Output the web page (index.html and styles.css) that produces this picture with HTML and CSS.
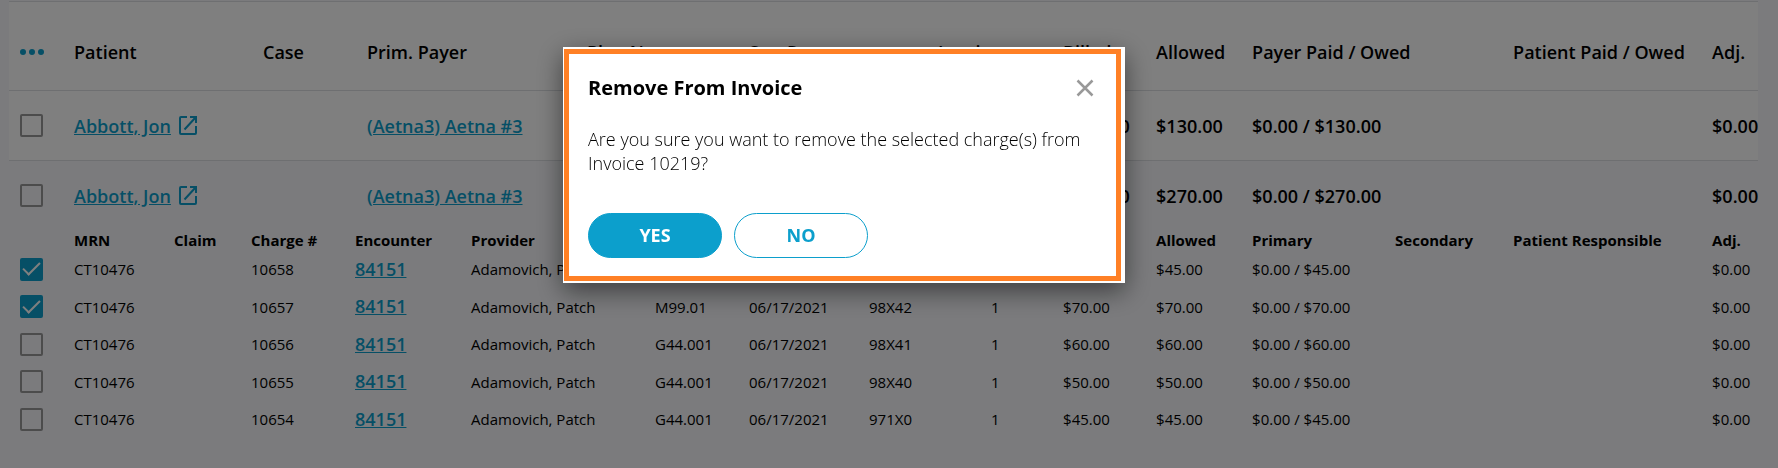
FILE: index.html
```html
<!DOCTYPE html>
<html lang="en">
<head>
<meta charset="utf-8">
<title>Charges</title>
<link rel="stylesheet" href="styles.css">
</head>
<body>
<svg class="sprite" aria-hidden="true">
  <symbol id="external" viewBox="0 0 18 19">
    <path d="M8 1H2A1 1 0 0 0 1 2V17a1 1 0 0 0 1 1h14a1 1 0 0 0 1-1V10M11 1h6v6M17 1L5.500 13.500" fill="none" stroke="currentColor" stroke-width="2"/>
  </symbol>
</svg>
<main class="page">
  <table class="charges">
    <colgroup>
      <col class="c-pick"><col class="c-mrn"><col class="c-claim"><col class="c-step"><col class="c-case"><col class="c-step"><col class="c-encounter"><col class="c-provider"><col class="c-plan"><col class="c-code"><col class="c-date"><col class="c-cpt"><col class="c-invoice"><col class="c-units"><col class="c-billed"><col class="c-allowed"><col class="c-primary"><col class="c-secondary"><col class="c-responsible"><col class="c-adj">
    </colgroup>
    <thead>
      <tr class="head">
        <th class="pick"><button class="more" type="button" aria-label="More actions"><svg viewBox="0 0 24 6" width="24" height="6"><circle cx="3" cy="3" r="3"/><circle cx="12" cy="3" r="3"/><circle cx="21" cy="3" r="3"/></svg></button></th>
        <th colspan="3">Patient</th>
        <th colspan="2">Case</th>
        <th colspan="2">Prim. Payer</th>
        <th colspan="2">Plan Name</th>
        <th colspan="2">Svc. Range</th>
        <th colspan="2">Invoice</th>
        <th>Billed</th>
        <th>Allowed</th>
        <th colspan="2">Payer Paid / Owed</th>
        <th>Patient Paid / Owed</th>
        <th>Adj.</th>
      </tr>
    </thead>
    <tbody>
      <tr class="patient">
        <td class="pick"><input class="check" type="checkbox" aria-label="Select Abbott, Jon, $130.00"></td>
        <td colspan="5"><span class="name"><a href="#">Abbott, Jon</a><a class="external" href="#" aria-label="Open patient"><svg width="18" height="19"><use href="#external"/></svg></a></span></td>
        <td colspan="8"><a href="#">(Aetna3) Aetna #3</a></td>
        <td>$130.00</td>
        <td>$130.00</td>
        <td colspan="3">$0.00 / $130.00</td>
        <td>$0.00</td>
      </tr>
      <tr class="patient expanded">
        <td class="pick"><input class="check" type="checkbox" aria-label="Select Abbott, Jon, $270.00"></td>
        <td colspan="5"><span class="name"><a href="#">Abbott, Jon</a><a class="external" href="#" aria-label="Open patient"><svg width="18" height="19"><use href="#external"/></svg></a></span></td>
        <td colspan="8"><a href="#">(Aetna3) Aetna #3</a></td>
        <td>$270.00</td>
        <td>$270.00</td>
        <td colspan="3">$0.00 / $270.00</td>
        <td>$0.00</td>
      </tr>
    </tbody>
    <tbody class="lines">
      <tr class="subhead">
        <th></th>
        <th>MRN</th>
        <th>Claim</th>
        <th colspan="2">Charge #</th>
        <th colspan="2">Encounter</th>
        <th colspan="8">Provider</th>
        <th>Allowed</th>
        <th>Primary</th>
        <th>Secondary</th>
        <th>Patient Responsible</th>
        <th>Adj.</th>
      </tr>
      <tr>
        <td class="pick"><input class="check" type="checkbox" aria-label="Select charge 10658" checked></td>
        <td colspan="2">CT10476</td><td colspan="2">10658</td><td colspan="2"><a href="#">84151</a></td><td colspan="8">Adamovich, Patch</td><td>$45.00</td><td colspan="3">$0.00 / $45.00</td><td>$0.00</td>
      </tr>
      <tr>
        <td class="pick"><input class="check" type="checkbox" aria-label="Select charge 10657" checked></td>
        <td colspan="2">CT10476</td><td colspan="2">10657</td><td colspan="2"><a href="#">84151</a></td><td colspan="2">Adamovich, Patch</td><td>M99.01</td><td>06/17/2021</td><td colspan="2">98X42</td><td>1</td><td>$70.00</td><td>$70.00</td><td colspan="3">$0.00 / $70.00</td><td>$0.00</td>
      </tr>
      <tr>
        <td class="pick"><input class="check" type="checkbox" aria-label="Select charge 10656"></td>
        <td colspan="2">CT10476</td><td colspan="2">10656</td><td colspan="2"><a href="#">84151</a></td><td colspan="2">Adamovich, Patch</td><td>G44.001</td><td>06/17/2021</td><td colspan="2">98X41</td><td>1</td><td>$60.00</td><td>$60.00</td><td colspan="3">$0.00 / $60.00</td><td>$0.00</td>
      </tr>
      <tr>
        <td class="pick"><input class="check" type="checkbox" aria-label="Select charge 10655"></td>
        <td colspan="2">CT10476</td><td colspan="2">10655</td><td colspan="2"><a href="#">84151</a></td><td colspan="2">Adamovich, Patch</td><td>G44.001</td><td>06/17/2021</td><td colspan="2">98X40</td><td>1</td><td>$50.00</td><td>$50.00</td><td colspan="3">$0.00 / $50.00</td><td>$0.00</td>
      </tr>
      <tr>
        <td class="pick"><input class="check" type="checkbox" aria-label="Select charge 10654"></td>
        <td colspan="2">CT10476</td><td colspan="2">10654</td><td colspan="2"><a href="#">84151</a></td><td colspan="2">Adamovich, Patch</td><td>G44.001</td><td>06/17/2021</td><td colspan="2">971X0</td><td>1</td><td>$45.00</td><td>$45.00</td><td colspan="3">$0.00 / $45.00</td><td>$0.00</td>
      </tr>
    </tbody>
  </table>
</main>
<div class="backdrop">
  <div class="frame" role="dialog" aria-modal="true" aria-labelledby="dialog-title">
    <section class="dialog">
      <header class="dialog-head">
        <h2 id="dialog-title">Remove From Invoice</h2>
        <button class="close" type="button" aria-label="Close"><svg width="18" height="18" viewBox="0 0 18 18"><path d="M1.500 1.500l15 15M16.500 1.500l-15 15" fill="none" stroke="currentColor" stroke-width="2.500"/></svg></button>
      </header>
      <p>Are you sure you want to remove the selected charge(s) from Invoice 10219?</p>
      <div class="actions">
        <button class="btn primary" type="button">YES</button>
        <button class="btn" type="button">NO</button>
      </div>
    </section>
  </div>
</div>
</body>
</html>
```
FILE: styles.css
```css
:root {
  --accent: #0c9fcc;
  --line: #dcdfe3;
  --tint: #f6f7fb;
}

* { box-sizing: border-box; }

body {
  margin: 0;
  min-height: 100vh;
  background: var(--tint);
  color: #000;
  font: 18px/24px "Open Sans", sans-serif;
}

.sprite { display: none; }

button { font: inherit; cursor: pointer; }

a { color: var(--accent); font-weight: 600; }

.page { padding: 1px 20px 0 9px; }

/* Charges table */
.charges {
  width: 100%;
  table-layout: fixed;
  border-collapse: separate;
  border-spacing: 0;
  border-top: 1px solid var(--line);
  background: #fff;
}

.c-pick { width: 65px; }
.c-mrn { width: 100px; }
.c-claim { width: 77px; }
.c-step { width: 12px; }
.c-case { width: 92px; }
.c-encounter { width: 104px; }
.c-provider { width: 116px; }
.c-plan { width: 68px; }
.c-code { width: 94px; }
.c-date { width: 120px; }
.c-cpt { width: 69px; }
.c-invoice { width: 53px; }
.c-units { width: 72px; }
.c-billed { width: 93px; }
.c-allowed { width: 96px; }
.c-primary { width: 143px; }
.c-secondary { width: 118px; }
.c-responsible { width: 199px; }
.c-adj { width: 46px; }

.charges th,
.charges td {
  padding: 0;
  text-align: left;
  vertical-align: middle;
  white-space: nowrap;
}

.charges th { font-weight: 600; }
.charges .pick { padding-left: 11px; }

.charges .head th {
  height: 89px;
  padding-top: 12px;
  border-bottom: 1px solid var(--line);
}

.patient td {
  height: 70px;
  border-bottom: 1px solid var(--line);
  font-weight: 600;
}

.patient.expanded td { height: 69px; border-bottom: 0; }

.expanded,
.lines { background: var(--tint); }

.name {
  display: flex;
  align-items: center;
  gap: 8px;
}

.external { display: flex; }

.lines { font-size: 15px; }
.lines th { height: 20px; line-height: 20px; font-weight: 700; }
.lines tr:nth-child(odd) td { height: 37px; }
.lines tr:nth-child(even) td { height: 38px; }
.lines a { font-size: 18px; }

.more {
  display: flex;
  padding: 0;
  border: 0;
  background: none;
  fill: var(--accent);
}

.check {
  appearance: none;
  display: grid;
  place-items: center;
  width: 23px;
  height: 23px;
  margin: 0;
  border: 2px solid #999;
  border-radius: 2px;
}

.check:checked {
  border-color: var(--accent);
  background: var(--accent);
}

.check:checked::after {
  content: "";
  width: 15px;
  height: 7px;
  margin-bottom: 5px;
  border: solid #fff;
  border-width: 0 0 2px 2px;
  rotate: -45deg;
}

/* Confirmation dialog */
.backdrop {
  position: fixed;
  inset: 0;
  display: flex;
  align-items: flex-start;
  justify-content: center;
  padding: 47px 90px 0 0;
  background: rgba(0, 0, 0, 0.5);
}

.frame {
  width: 562px;
  padding: 2px 4px 2px 1px;
  background: #fff;
  box-shadow: 0 8px 24px rgba(0, 0, 0, 0.5);
}

.dialog {
  padding: 22px 19px 18px;
  border: 5px solid #ff8025;
}

.dialog-head {
  display: flex;
  align-items: center;
  justify-content: space-between;
  padding-right: 3px;
}

.dialog h2 {
  margin: 0;
  font-size: 20px;
  font-weight: 700;
}

.close {
  display: flex;
  padding: 0;
  border: 0;
  background: none;
  color: #999;
}

.dialog p {
  margin: 27px 0 38px;
  font-weight: 300;
}

.actions {
  display: flex;
  gap: 12px;
}

.btn {
  width: 134px;
  height: 45px;
  padding: 0 0 2px;
  border: 1px solid var(--accent);
  border-radius: 23px;
  background: #fff;
  color: var(--accent);
  font-weight: 700;
}

.btn.primary {
  background: var(--accent);
  color: #fff;
}
```
